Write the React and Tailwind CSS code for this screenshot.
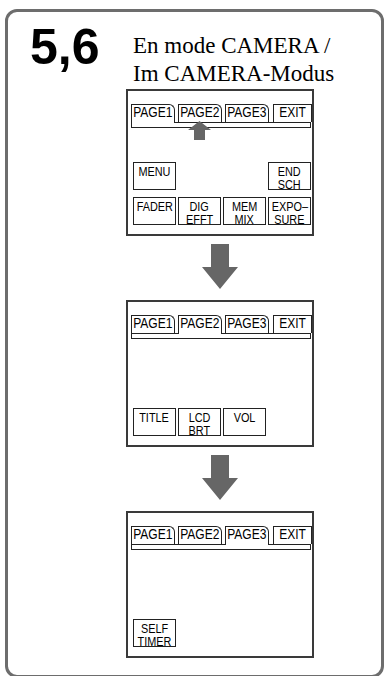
import React from "react";

function TabText({ label }) {
  return (
    <span className="inline-block origin-center scale-x-[0.86] whitespace-nowrap">
      {label}
    </span>
  );
}

function Tab({ label, active, last }) {
  if (last) {
    return (
      <div className="flex h-[18px] w-[39px] justify-center border border-b-0 border-[#222] bg-white text-[14px] leading-[14px] text-black">
        <TabText label={label} />
      </div>
    );
  }
  if (active) {
    return (
      <div className="relative z-10 -mb-px flex h-[19px] w-[44px] justify-center rounded-tr-[6px] border border-b-0 border-[#222] bg-white text-[14px] leading-[14px] text-black">
        <TabText label={label} />
      </div>
    );
  }
  return (
    <div className="flex h-[18px] w-[44px] justify-center rounded-tr-[6px] border border-b-0 border-[#222] bg-white text-[14px] leading-[14px] text-black">
      <TabText label={label} />
    </div>
  );
}

function Tabs({ active, arrow }) {
  return (
    <div className="relative ml-[3px] mt-[13px] w-[180px]">
      <div className="flex items-end gap-[3px]">
        <Tab label="PAGE1" active={active === 1} />
        <Tab label="PAGE2" active={active === 2} />
        <Tab label="PAGE3" active={active === 3} />
        <div className="ml-px">
          <Tab label="EXIT" last />
        </div>
      </div>
      <div className="h-[6px] w-[180px] border border-[#222] bg-white" />
      {arrow && (
        <svg
          className="absolute left-[57px] top-[17px] z-20"
          width="23"
          height="19"
          viewBox="0 0 23 19"
        >
          <polygon points="11.5,0 23,9 17,9 17,19 6,19 6,9 0,9" fill="#666" />
        </svg>
      )}
    </div>
  );
}

function Btn({ lines }) {
  return (
    <div className="flex h-[28px] w-[43px] flex-col items-center border border-[#222] pt-[3px] text-[12.5px] leading-[13px] text-black">
      {lines.map((l, i) => (
        <span
          key={i}
          className="inline-block origin-center scale-x-[0.87] whitespace-nowrap"
        >
          {l}
        </span>
      ))}
    </div>
  );
}

function Screen({ children }) {
  return (
    <div className="flex h-[147px] w-[188px] flex-col border-2 border-[#3a3a3a] bg-white">
      {children}
    </div>
  );
}

function DownArrow() {
  return (
    <div className="flex h-[64px] w-[188px] justify-center pt-[8px]">
      <svg width="36" height="45" viewBox="0 0 36 45">
        <polygon points="9,0 27,0 27,23 36,23 18,45 0,23 9,23" fill="#666" />
      </svg>
    </div>
  );
}

export default function App() {
  return (
    <div className="h-[676px] w-[386px] overflow-hidden bg-white font-['Liberation_Sans',Arial,sans-serif]">
      <div className="ml-[5px] mt-[9px] flex h-[669px] w-[379px] flex-col rounded-[12px] border-[3px] border-[#6d6d6d]">
        <div className="flex h-[77px]">
          <div className="ml-[22px] mt-[10px] w-[103px] text-[50px] font-bold leading-[50px] text-black">
            5,6
          </div>
          <div className="mt-[20px] font-['Liberation_Serif','Times_New_Roman',serif] text-[23px] leading-[28px] text-black">
            <div>En mode CAMERA /</div>
            <div>Im CAMERA-Modus</div>
          </div>
        </div>
        <div className="ml-[118px] flex flex-col">
          <Screen>
            <Tabs active={1} arrow />
            <div className="mt-auto flex flex-col gap-[7px] pb-[9px] pl-[5px]">
              <div className="flex w-[178px] justify-between">
                <Btn lines={["MENU"]} />
                <Btn lines={["END", "SCH"]} />
              </div>
              <div className="flex gap-[2px]">
                <Btn lines={["FADER"]} />
                <Btn lines={["DIG", "EFFT"]} />
                <Btn lines={["MEM", "MIX"]} />
                <Btn lines={["EXPO–", "SURE"]} />
              </div>
            </div>
          </Screen>
          <DownArrow />
          <Screen>
            <Tabs active={2} />
            <div className="mt-auto flex gap-[2px] pb-[9px] pl-[5px]">
              <Btn lines={["TITLE"]} />
              <Btn lines={["LCD", "BRT"]} />
              <Btn lines={["VOL"]} />
            </div>
          </Screen>
          <DownArrow />
          <Screen>
            <Tabs active={3} />
            <div className="mt-auto flex gap-[2px] pb-[9px] pl-[5px]">
              <Btn lines={["SELF", "TIMER"]} />
            </div>
          </Screen>
        </div>
      </div>
    </div>
  );
}
